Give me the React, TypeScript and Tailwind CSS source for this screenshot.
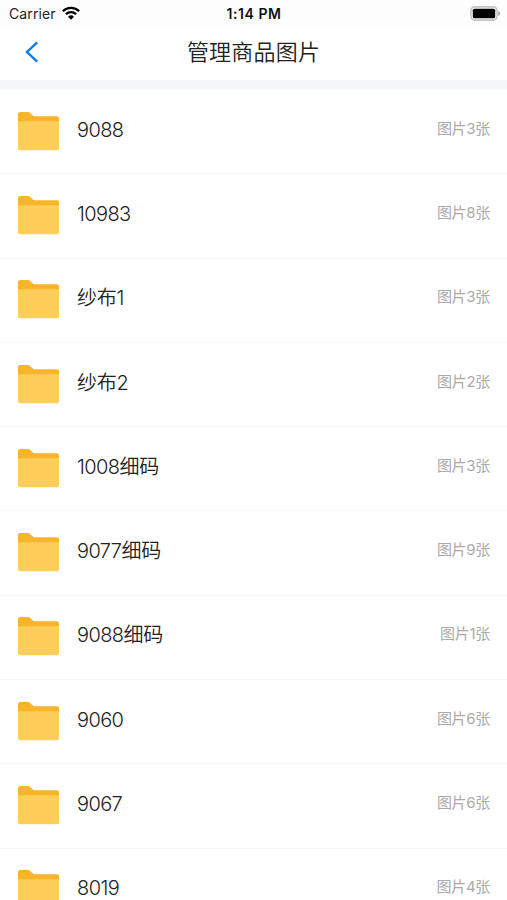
const folders = [
  { name: "9088", count: 3 },
  { name: "10983", count: 8 },
  { name: "纱布1", count: 3 },
  { name: "纱布2", count: 2 },
  { name: "1008细码", count: 3 },
  { name: "9077细码", count: 9 },
  { name: "9088细码", count: 1 },
  { name: "9060", count: 6 },
  { name: "9067", count: 6 },
  { name: "8019", count: 4 },
];

function FolderIcon() {
  return (
    <svg className="block h-[39px] w-[41px] shrink-0" viewBox="0 0 41 39" fill="none">
      <path d="M0 2.2C0 1 .9 0 2.1 0h7.9c.8 0 1.3.3 1.9.8l3 2.8c.5.5 1 .7 1.7.7h22.3c1.2 0 2.1.9 2.1 2.1V14H0Z" fill="#f8b42b" />
      <path d="M0 9.3h41v26.9c0 1.1-.9 2-2 2H2c-1.1 0-2-.9-2-2Z" fill="#ffcd5a" />
    </svg>
  );
}

function StatusBar() {
  return (
    <div className="grid h-7 grid-cols-3 items-center bg-[#fdfdfd] pr-[6px] pl-[9px] text-black">
      <div className="flex items-center gap-[6px]">
        <span className="text-[14px] leading-5 tracking-[0.1px] text-[#222]">Carrier</span>
        <svg className="-mt-[2px] h-[14px] w-[18px]" viewBox="0 0 18 14" fill="none" stroke="#000" strokeWidth="2.3">
          <path d="M.9 5.2a11.6 11.6 0 0 1 16.2 0" />
          <path d="M3.9 8.3a7.3 7.3 0 0 1 10.2 0" />
          <path d="M9 13.8 6 10.8a4.3 4.3 0 0 1 6 0Z" fill="#000" stroke="none" />
        </svg>
      </div>
      <div className="pr-[2px] text-center text-[14px] leading-5 font-semibold tracking-[0.55px] whitespace-nowrap text-[#111]">
        1:14 PM
      </div>
      <svg className="-mt-[2px] h-[15px] w-[31px] justify-self-end" viewBox="0 0 31 15" fill="none">
        <rect x=".9" y=".9" width="26.2" height="13.2" rx="4" stroke="#c4c4c4" strokeWidth="1.6" />
        <rect x="2.8" y="2.8" width="22.4" height="9.4" rx="1.5" fill="#000" />
        <path d="M28.2 5v5c1.2-.5 2-1.4 2-2.5s-.8-2-2-2.5Z" fill="#aaa" />
      </svg>
    </div>
  );
}

function FolderName({ name }: { name: string }) {
  return (
    <span className="flex-1 pt-[1px] text-[20px] leading-7 font-[350] text-[#222]">
      {name.split(/(\d+)/).filter(Boolean).map((part, i) => (
        <span key={i} className={/\d/.test(part) ? "tracking-[-0.6px]" : "tracking-[-0.2px]"}>
          {part}
        </span>
      ))}
    </span>
  );
}

export default function App() {
  return (
    <div className="h-[900px] w-full overflow-hidden bg-white font-['Inter','Noto_Sans_CJK_SC',sans-serif]">
      <StatusBar />

      <header className="grid h-[52px] grid-cols-[64px_1fr_64px] items-center bg-white">
        <button className="flex h-full items-center pb-1 pl-[25px]" aria-label="返回">
          <svg className="h-[22px] w-[14px]" viewBox="0 0 14 22" fill="none" stroke="#0a7aec" strokeWidth="2.4">
            <path d="M12.2 1.3 2 11l10.2 9.7" />
          </svg>
        </button>
        <h1 className="pb-[5px] text-center text-[22px] leading-8 font-[350] tracking-[0.2px] text-[#222]">管理商品图片</h1>
      </header>

      <div className="h-[10px] bg-[#f6f7fa]" />

      <ul>
        {folders.map((f) => (
          <li
            key={f.name}
            className="flex h-[84.3px] items-center border-b border-[#f7f7f8] pr-[17px] pb-[5px] pl-[18px]"
          >
            <div className="mr-[18px] pt-1">
              <FolderIcon />
            </div>
            <FolderName name={f.name} />
            <span className="pb-[1px] text-[15px] leading-5 tracking-[-0.3px] text-[#aaa]">图片{f.count}张</span>
          </li>
        ))}
      </ul>
    </div>
  );
}
